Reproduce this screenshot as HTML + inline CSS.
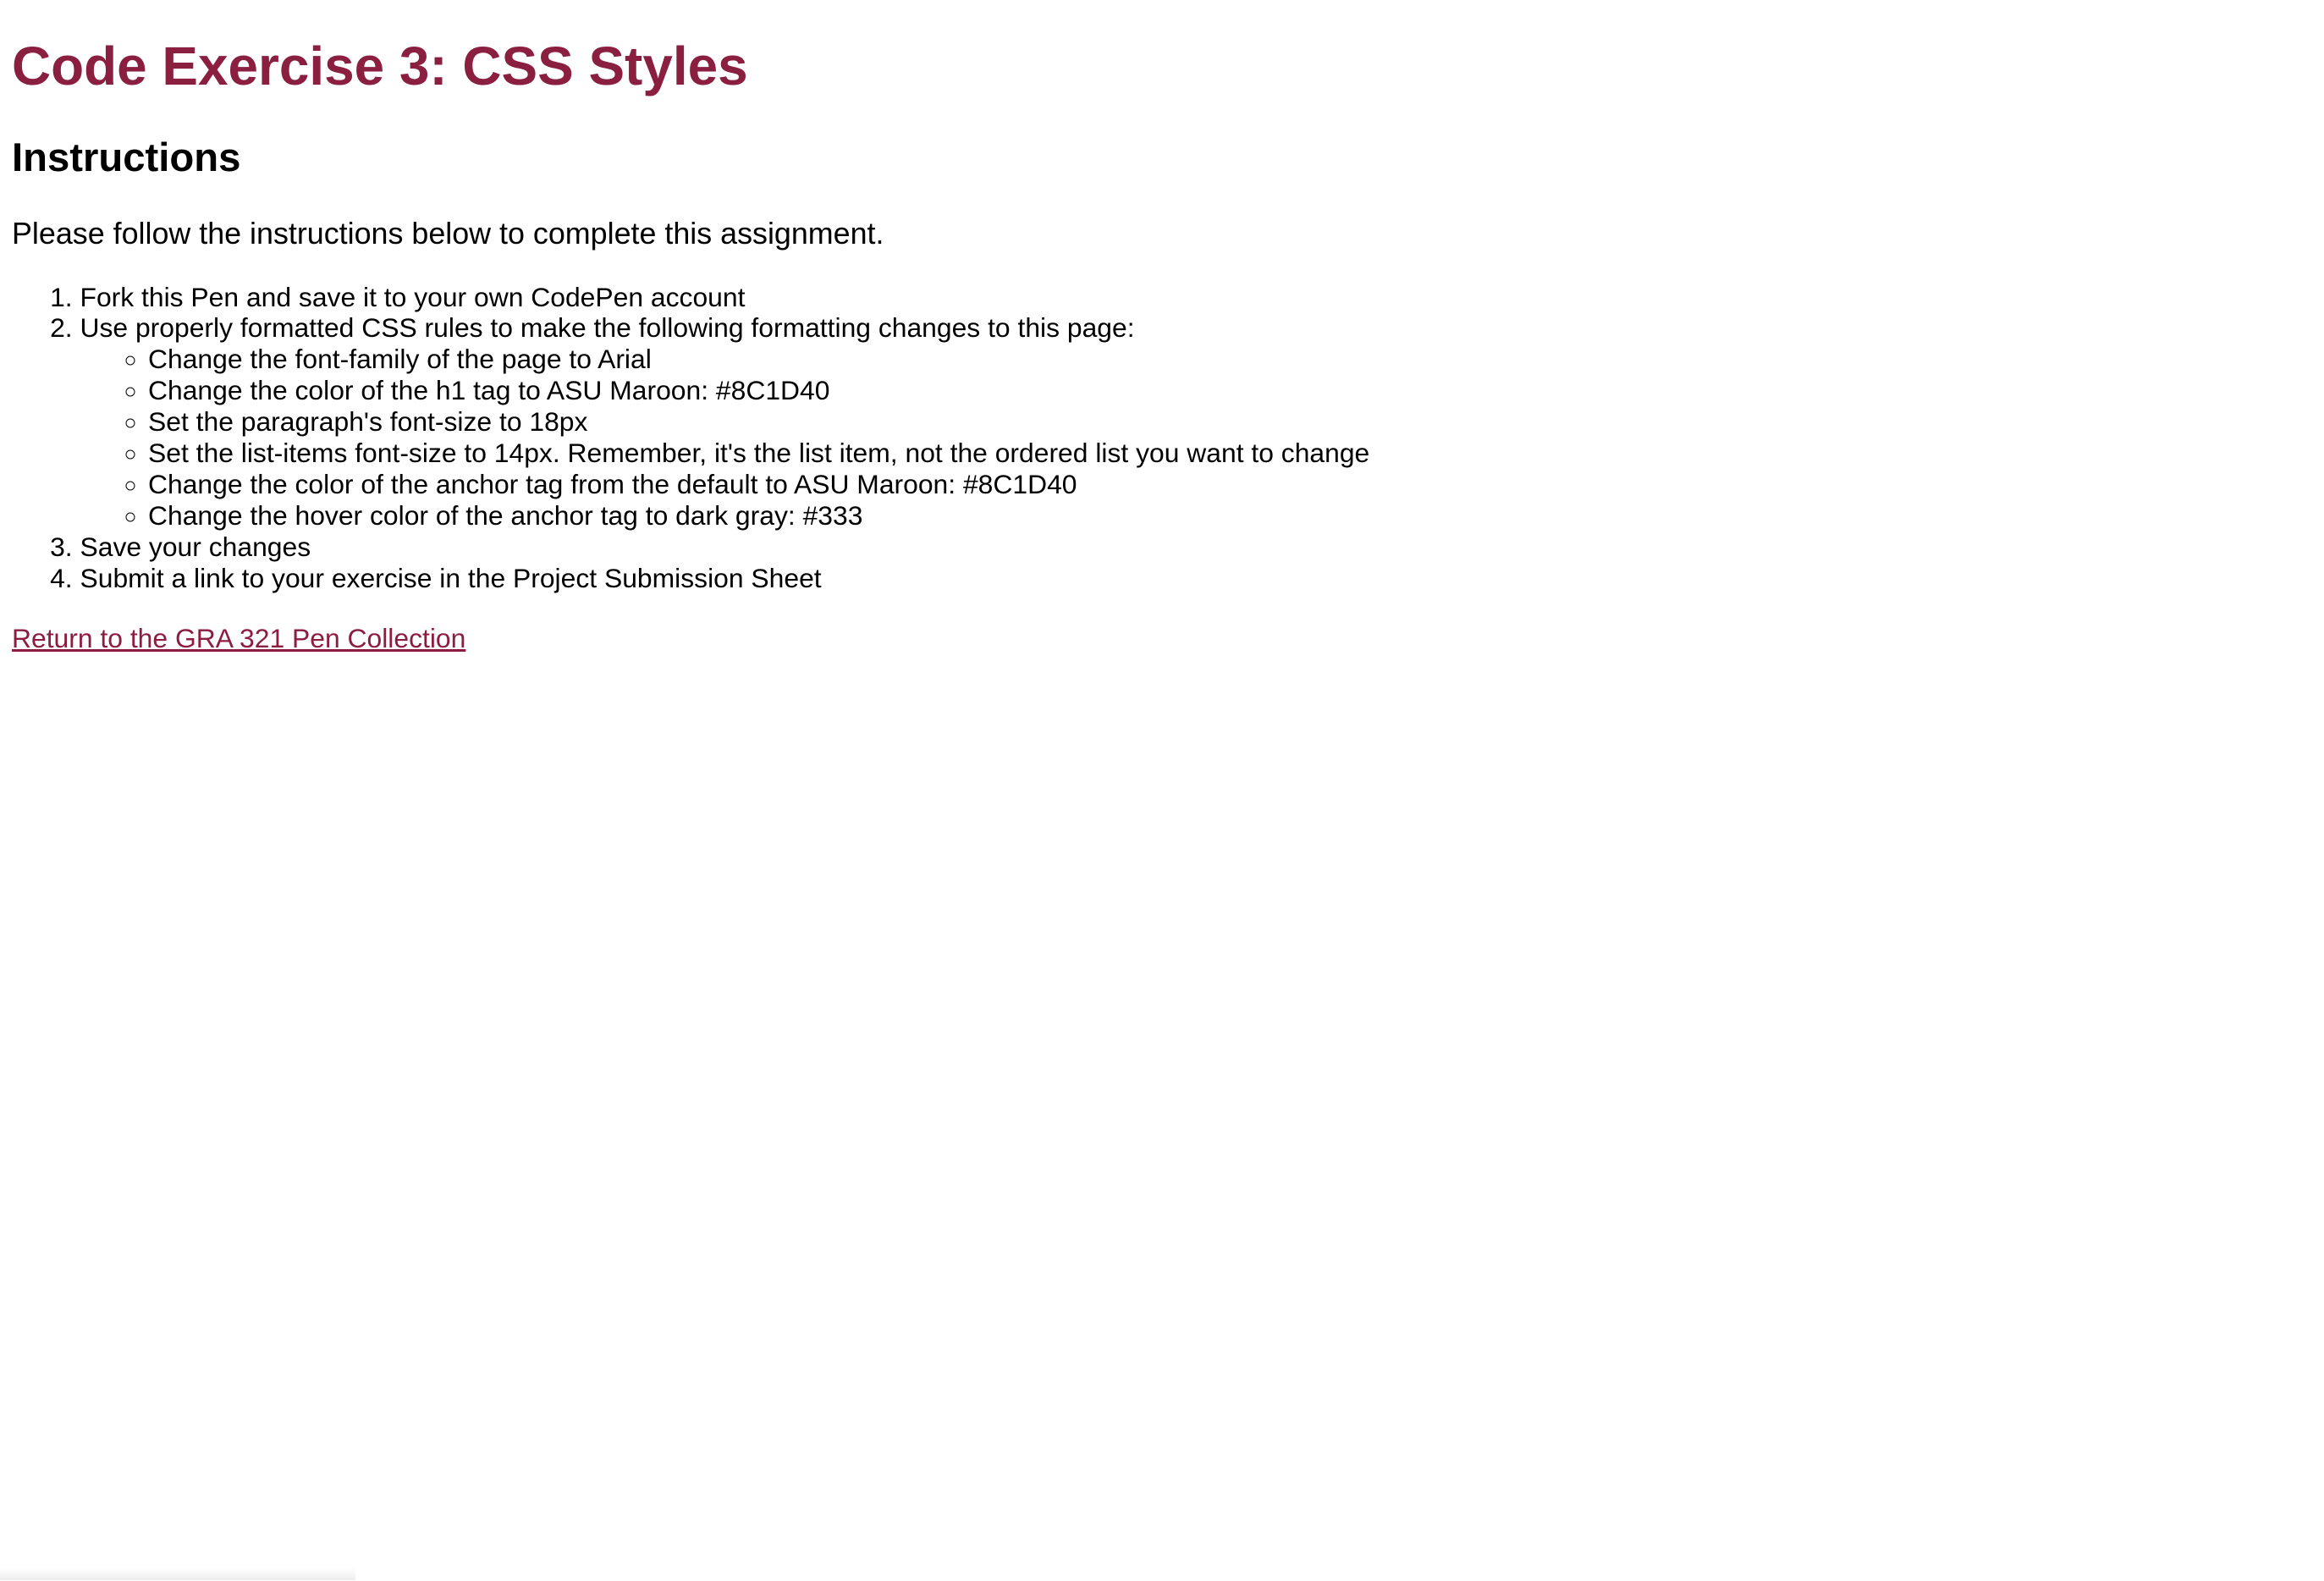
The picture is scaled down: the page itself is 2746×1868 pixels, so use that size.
<!DOCTYPE html>
<html>
<head>
<meta charset="utf-8">
<style>
html{zoom:1.75;}
body{margin:0;width:1569px;height:1067px;position:relative;background:#fff;font-family:"Liberation Sans",Arial,sans-serif;color:#000;overflow:hidden;}
.b{position:absolute;left:8px;white-space:nowrap;}
h1{margin:0;font-size:36.5px;font-weight:bold;color:#8A1F40;line-height:44px;}
h2{margin:0;font-size:27px;font-weight:bold;line-height:32px;}
p{margin:0;font-size:20.5px;line-height:22px;}
ol{margin:0;padding-left:54px;font-size:18.2px;line-height:21.1px;}
ul{margin:0;padding-left:46px;list-style:circle;}
a{color:#8C1D40;text-decoration:underline;font-size:18.2px;line-height:22px;}
.sh{position:absolute;left:0;bottom:0;width:240px;height:8px;background:linear-gradient(to bottom,rgba(0,0,0,0),rgba(0,0,0,0.07));}
</style>
</head>
<body>
<div class="b" style="top:23px"><h1>Code Exercise 3: CSS Styles</h1></div>
<div class="b" style="top:91px"><h2>Instructions</h2></div>
<div class="b" style="top:147px"><p>Please follow the instructions below to complete this assignment.</p></div>
<div class="b" style="top:190px;left:0">
<ol>
<li>Fork this Pen and save it to your own CodePen account</li>
<li>Use properly formatted CSS rules to make the following formatting changes to this page:
<ul>
<li>Change the font-family of the page to Arial</li>
<li>Change the color of the h1 tag to ASU Maroon: #8C1D40</li>
<li>Set the paragraph's font-size to 18px</li>
<li>Set the list-items font-size to 14px. Remember, it's the list item, not the ordered list you want to change</li>
<li>Change the color of the anchor tag from the default to ASU Maroon: #8C1D40</li>
<li>Change the hover color of the anchor tag to dark gray: #333</li>
</ul>
</li>
<li>Save your changes</li>
<li>Submit a link to your exercise in the Project Submission Sheet</li>
</ol>
</div>
<div class="b" style="top:420px"><a>Return to the GRA 321 Pen Collection</a></div>
<div class="sh"></div>
</body>
</html>
